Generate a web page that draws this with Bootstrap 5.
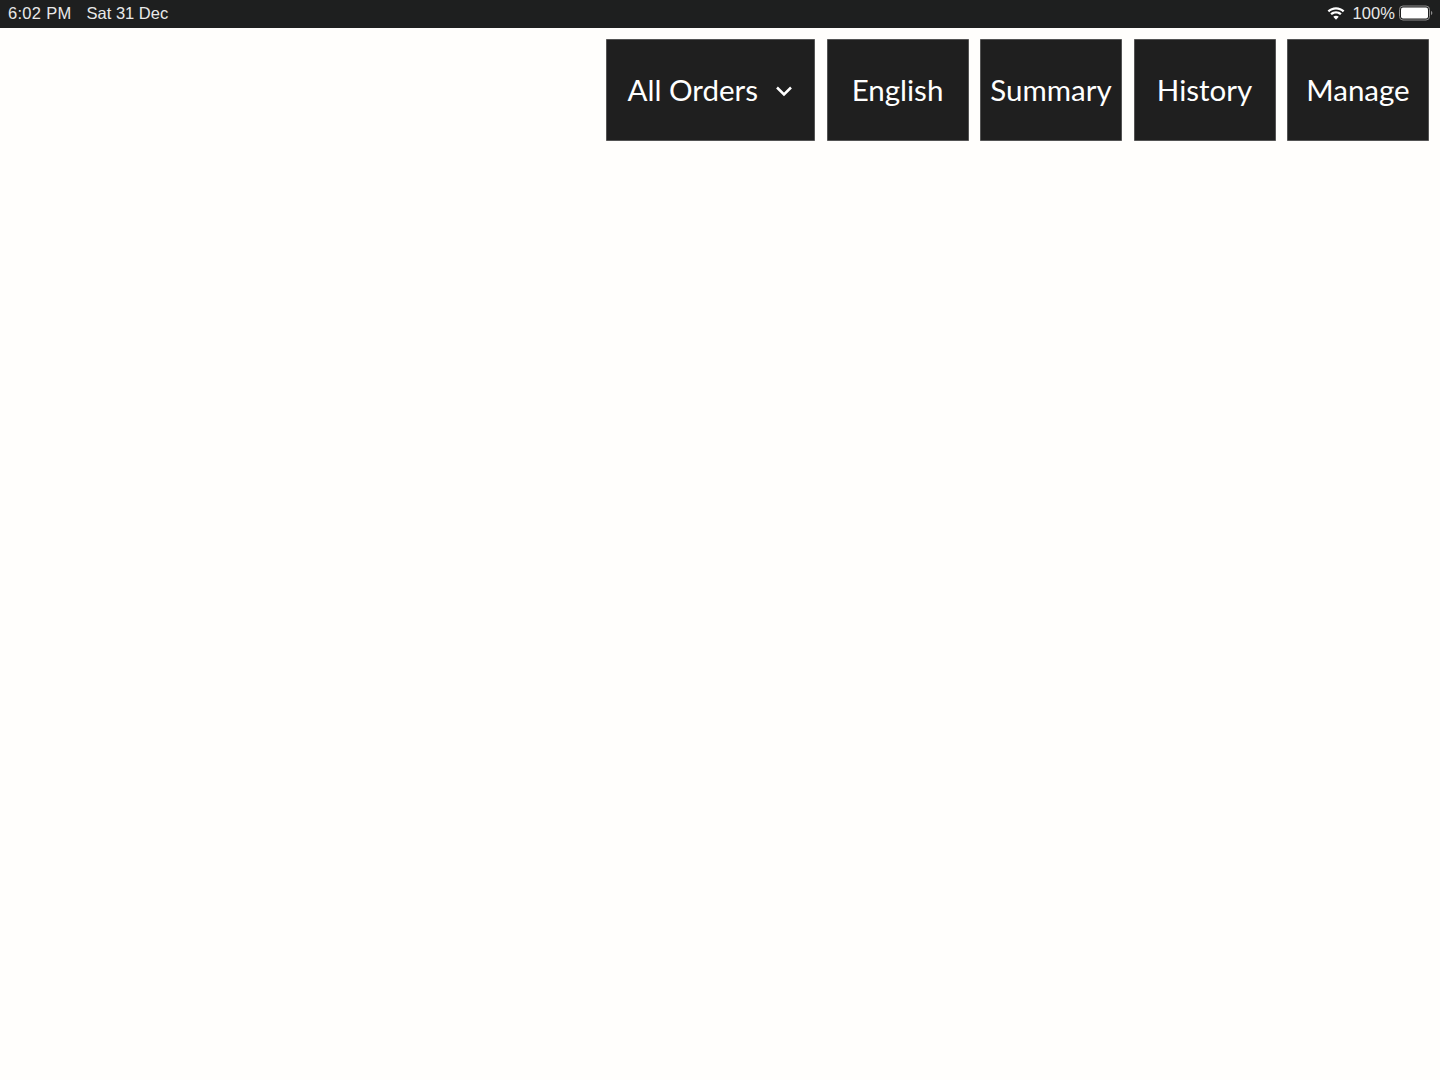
<!DOCTYPE html>
<html lang="en">
<head>
  <meta charset="UTF-8" />
  <title>Orders</title>
  <meta name="viewport" content="width=device-width, initial-scale=1" />
  <link href="https://cdn.jsdelivr.net/npm/bootstrap@5.3.3/dist/css/bootstrap.min.css" rel="stylesheet">
  <style>
    html, body { height: 100%; }
    body { background: #fffefc; }
    .status-bar { height: 28px; background: #1e1f1f; color: #e9e9e9; font: 16.5px/26px "Liberation Sans", Arial, sans-serif; padding: 0 6px 2px 8px; }
    .status-time { letter-spacing: .3px; }
    .status-date { margin-left: 15px; }
    .status-pct { letter-spacing: .1px; }
    .top-btns { gap: 11.5px; padding: 11px 11px 0 0; }
    .top-btn { height: 101.5px; width: 142px; padding: 0 0 1px; background: #1f1f1f; color: #fff; border: 0; border-radius: 0; box-shadow: inset 0 0 0 .5px #8a8a8a; font: 29.5px/1 "Lato", sans-serif; }
    .top-btn:hover, .top-btn:active { background: #1f1f1f !important; color: #fff !important; }
    .top-btn-wide { width: 209.5px; }
    .chev { margin-left: 17px; vertical-align: 4px; }
    .wifi-icon { margin-right: 2px; }
  </style>
</head>
<body>
  <div class="status-bar d-flex justify-content-between align-items-center">
    <div><span class="status-time">6:02 PM</span><span class="status-date">Sat 31 Dec</span></div>
    <div class="d-flex align-items-center gap-1">
      <svg class="wifi-icon" width="20" height="15" viewBox="0 0 19 14" fill="#fff">
        <path d="M9.5 3.2c2.5 0 4.8 1 6.5 2.6l1.5-1.6C15.4 2.2 12.6 1 9.5 1S3.6 2.2 1.5 4.2L3 5.800C4.700 4.200 7 3.200 9.500 3.200z"/>
        <path d="M9.500 7c1.500 0 2.900.6 3.900 1.500l1.500-1.600C13.500 5.600 11.600 4.800 9.500 4.800s-4 .8-5.400 2.100l1.500 1.600C6.600 7.600 8 7 9.500 7z"/>
        <path d="M9.500 13l2.600-2.800c-.7-.6-1.600-1-2.600-1s-1.900.4-2.600 1z"/>
      </svg>
      <span class="status-pct">100%</span>
      <svg width="35" height="16" viewBox="0 0 35 16">
        <rect x=".5" y="1" width="30" height="14" rx="3.500" fill="none" stroke="#8e8e8e"/>
        <rect x="2" y="2.500" width="27" height="11" rx="2" fill="#fff"/>
        <path d="M32 6v4c.8-.3 1.300-1.100 1.300-2s-.5-1.700-1.300-2z" fill="#8e8e8e"/>
      </svg>
    </div>
  </div>
  <div class="top-btns d-flex justify-content-end">
    <button type="button" class="btn top-btn top-btn-wide">All Orders<svg class="chev" width="18" height="12" viewBox="0 0 18 12" fill="none" stroke="#fff" stroke-width="2.500"><path d="M2 2.500l7 7 7-7"/></svg></button>
    <button type="button" class="btn top-btn">English</button>
    <button type="button" class="btn top-btn">Summary</button>
    <button type="button" class="btn top-btn">History</button>
    <button type="button" class="btn top-btn">Manage</button>
  </div>
  <script src="https://cdn.jsdelivr.net/npm/bootstrap@5.3.3/dist/js/bootstrap.bundle.min.js"></script>
</body>
</html>
